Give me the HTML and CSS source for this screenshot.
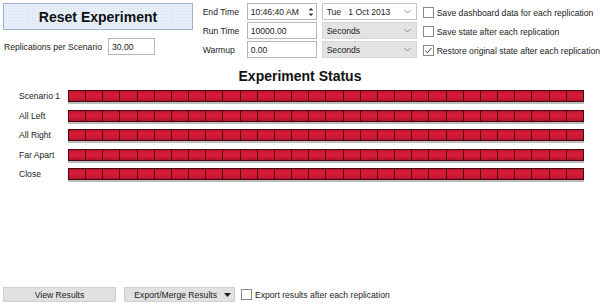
FILE: index.html
```html
<!DOCTYPE html>
<html>
<head>
<meta charset="utf-8">
<link rel="stylesheet" href="styles.css">
</head>
<body>
<div class="page">
  <div class="top">
    <div class="left">
      <button class="reset">Reset Experiment</button>
      <div class="reps">
        <span class="lbl">Replications per Scenario</span>
        <div class="field reps-field">30.00</div>
      </div>
    </div>
    <div class="mid">
      <div class="mrow">
        <span class="mlbl">End Time</span>
        <div class="field time-field"><span>10:46:40 AM</span>
          <span class="spin"><svg width="8" height="12" viewBox="0 0 8 12"><path d="M1.5 4.5 L4 2 L6.5 4.5Z M1.5 7.5 L4 10 L6.5 7.5Z" fill="#333"/></svg></span>
        </div>
        <div class="combo white"><span>Tue&nbsp;&nbsp;&nbsp;1 Oct 2013</span><svg class="chev" width="7" height="5" viewBox="0 0 7 5"><path d="M0.5 1 L3.5 4 L6.5 1" fill="none" stroke="#888" stroke-width="1"/></svg></div>
      </div>
      <div class="mrow">
        <span class="mlbl">Run Time</span>
        <div class="field num-field">10000.00</div>
        <div class="combo grey"><span>Seconds</span><svg class="chev" width="7" height="5" viewBox="0 0 7 5"><path d="M0.5 1 L3.5 4 L6.5 1" fill="none" stroke="#888" stroke-width="1"/></svg></div>
      </div>
      <div class="mrow">
        <span class="mlbl">Warmup</span>
        <div class="field num-field">0.00</div>
        <div class="combo grey"><span>Seconds</span><svg class="chev" width="7" height="5" viewBox="0 0 7 5"><path d="M0.5 1 L3.5 4 L6.5 1" fill="none" stroke="#888" stroke-width="1"/></svg></div>
      </div>
    </div>
    <div class="right">
      <label class="chk"><span class="box"></span>Save dashboard data for each replication</label>
      <label class="chk"><span class="box"></span>Save state after each replication</label>
      <label class="chk"><span class="box"><svg width="9" height="9" viewBox="0 0 9 9"><path d="M1.5 4.5 L3.5 6.8 L7.5 1.8" fill="none" stroke="#444" stroke-width="1"/></svg></span>Restore original state after each replication</label>
    </div>
  </div>

  <h2 class="status-title">Experiment Status</h2>

  <div class="status" id="status"></div>

  <div class="footer">
    <button class="btn view">View Results</button>
    <button class="btn export">Export/Merge Results <svg class="drop" width="7" height="4" viewBox="0 0 7 4"><path d="M0 0 L7 0 L3.5 4Z" fill="#222"/></svg></button>
    <label class="chk foot-chk"><span class="box"></span>Export results after each replication</label>
  </div>
</div>
<script>
  const names = ["Scenario 1","All Left","All Right","Far Apart","Close"];
  const st = document.getElementById("status");
  names.forEach(n => {
    const row = document.createElement("div");
    row.className = "srow";
    const l = document.createElement("span");
    l.className = "slbl";
    l.textContent = n;
    const bar = document.createElement("div");
    bar.className = "bar";
    for (let i = 0; i < 30; i++) {
      const c = document.createElement("div");
      c.className = "cell";
      bar.appendChild(c);
    }
    row.appendChild(l);
    row.appendChild(bar);
    st.appendChild(row);
  });
</script>
</body>
</html>
```

FILE: styles.css
```css
* { box-sizing: border-box; }
html, body { margin: 0; padding: 0; background: #fff; }
body {
  font-family: "Liberation Sans", Arial, sans-serif;
  font-size: 8.6px;
  color: #222;
}
.page {
  width: 600px;
  height: 305px;
  display: flex;
  flex-direction: column;
  position: relative;
}
.top {
  display: flex;
  padding: 3px 0 0 3px;
}
.left { width: 192px; display: flex; flex-direction: column; }
.reset {
  width: 190px;
  height: 27px;
  background-color: #e6eef9;
  background-image: radial-gradient(#d3dff0 0.6px, transparent 0.7px);
  background-size: 3px 3px;
  border: 1px solid #9fb3cf;
  font-family: "Liberation Sans", Arial, sans-serif;
  font-weight: bold;
  font-size: 14px;
  color: #111;
  padding: 0;
}
.reps {
  display: flex;
  align-items: center;
  margin-top: 8px;
  padding-left: 1px;
}
.lbl { width: 104px; }
.field {
  border: 1px solid #b5b5b5;
  background: #fff;
  height: 17px;
  display: flex;
  align-items: center;
  padding-left: 3px;
}
.reps-field { width: 47px; }
.mid {
  margin-left: 7px;
  display: flex;
  flex-direction: column;
  gap: 2px;
}
.mrow { display: flex; align-items: center; height: 17px; }
.mlbl { width: 46px; padding-left: 2px; }
.time-field, .num-field { width: 70px; }
.time-field { justify-content: space-between; padding-right: 1px; }
.spin { display: flex; align-items: center; }
.combo {
  margin-left: 5px;
  width: 95px;
  height: 17px;
  border: 1px solid #c4c4c4;
  display: flex;
  align-items: center;
  justify-content: space-between;
  padding: 0 5px 0 4px;
}
.combo.white { background: #fff; }
.combo.grey { background: #e3e3e3; border-color: #d6d6d6; }
.chev { display: block; }
.right {
  margin-left: 6px;
  display: flex;
  flex-direction: column;
  gap: 8px;
  padding-top: 4px;
}
.chk {
  display: flex;
  align-items: center;
  height: 11px;
  white-space: nowrap;
}
.box {
  width: 11px;
  height: 11px;
  border: 1px solid #8a8a8a;
  background: #fff;
  margin-right: 3px;
  display: flex;
  align-items: center;
  justify-content: center;
}
.status-title {
  margin: 10px 0 0 0;
  text-align: center;
  font-size: 14px;
  font-weight: bold;
  color: #111;
  height: 16px;
  line-height: 16px;
}
.status {
  margin-top: 6px;
  display: flex;
  flex-direction: column;
  gap: 7.5px;
}
.srow { display: flex; align-items: flex-start; height: 12px; }
.slbl { width: 68px; padding-left: 19px; line-height: 12px; }
.bar {
  width: 516px;
  height: 12px;
  display: grid;
  grid-template-columns: repeat(30, 1fr);
  border: 1px solid #4a0a12;
  box-shadow: 0 2px 0 #bdbdbd;
  background: #4a0a12;
  column-gap: 1px;
}
.cell {
  background: linear-gradient(#b8142e 0%, #d81c3a 30%, #d01a36 70%, #ad112b 100%);
}
.footer {
  margin-top: auto;
  display: flex;
  align-items: center;
  padding: 0 0 3px 3px;
}
.btn {
  height: 15px;
  background: #e1e1e1;
  border: 1px solid #cfcfcf;
  font-family: "Liberation Sans", Arial, sans-serif;
  font-size: 8.6px;
  color: #222;
  padding: 0;
}
.view { width: 113px; }
.export {
  width: 111px;
  margin-left: 8px;
  display: flex;
  align-items: center;
  justify-content: flex-end;
  padding-right: 3px;
  gap: 7px;
}
.drop { display: block; }
.foot-chk { margin-left: 6px; }
```
